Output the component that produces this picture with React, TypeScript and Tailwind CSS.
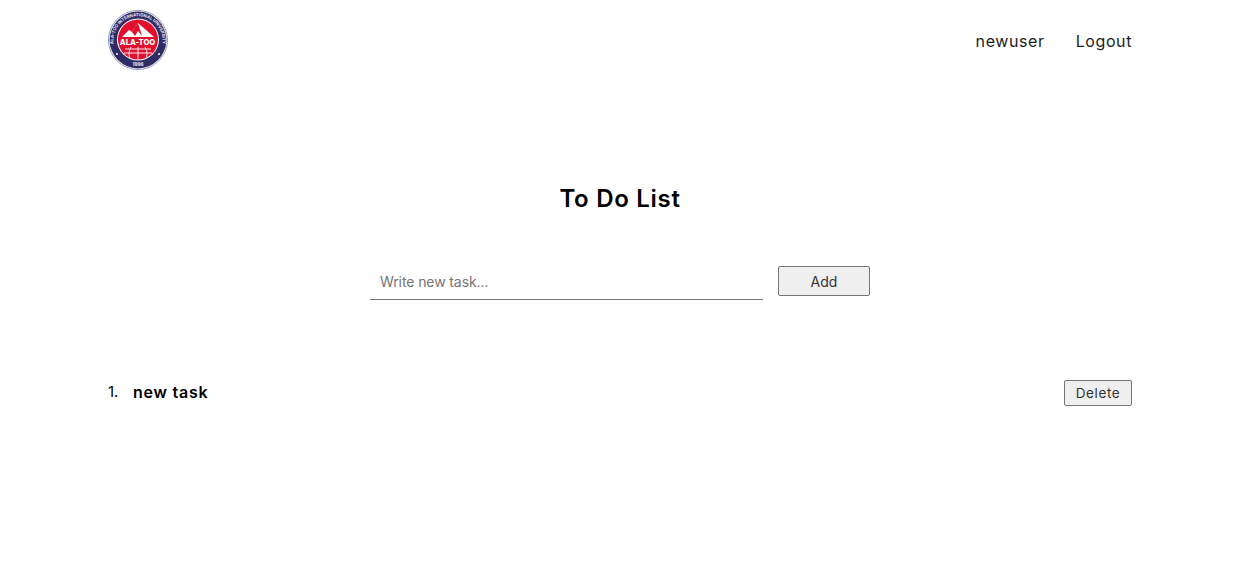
const font = { fontFamily: '"Inter", "Noto Sans", sans-serif' };

function Logo() {
  return (
    <svg width="60" height="60" viewBox="0 0 60 60" className="block">
      <defs>
        <path id="ring-top" d="M6.2 37 A24.6 24.6 0 1 1 53.8 37" />
        <clipPath id="disc">
          <circle cx="30" cy="29.5" r="20" />
        </clipPath>
      </defs>
      <circle cx="30" cy="30" r="29.5" fill="#fff" stroke="#9a9ab8" strokeWidth="1" />
      <circle cx="30" cy="30" r="28.4" fill="#2f2c63" />
      <circle cx="30" cy="29.5" r="21" fill="#fff" />
      <circle cx="30" cy="29.5" r="20" fill="#e2102f" />
      <g clipPath="url(#disc)">
        <path d="M14 27 L21 20 L24 22 L30 13 L46 27 Z" fill="#fff" />
        <path d="M24 22 L27 26 L30 21 L34 26 L30 13 Z" fill="#e2102f" />
        <path d="M17 39 H43 M16 43 H44 M30 37 V50 M23 37 Q19 44 23 50 M37 37 Q41 44 37 50" fill="none" stroke="#fff" strokeWidth="0.9" />
      </g>
      <text x="29.5" y="35" textAnchor="middle" fill="#fff" fontSize="7.6" fontWeight="800" fontFamily="Inter, sans-serif">ALA-TOO</text>
      <text fill="#e6e6f2" fontSize="4.3" fontWeight="700" fontFamily="Inter, sans-serif">
        <textPath href="#ring-top" startOffset="50%" textAnchor="middle">ALA-TOO INTERNATIONAL UNIVERSITY</textPath>
      </text>
      <text x="30" y="56" textAnchor="middle" fill="#f2f2f8" fontSize="4.6" fontWeight="700" fontFamily="Inter, sans-serif">1996</text>
      <circle cx="9" cy="44" r="1" fill="#fff" />
      <circle cx="51" cy="44" r="1" fill="#fff" />
    </svg>
  );
}

export default function App() {
  return (
    <div style={font} className="h-[572px] w-[1240px] bg-white px-[108px] pt-[10px] text-black">
      <header className="flex items-center justify-between">
        <Logo />
        <nav className="mt-[2px] flex gap-[31px] text-[16px] tracking-[0.6px] text-[#1c1c1c]">
          <a>newuser</a>
          <a>Logout</a>
        </nav>
      </header>

      <h1 className="mt-[114px] text-center text-[24px] leading-[30px] font-semibold tracking-[0.7px]">To Do List</h1>

      <form className="mx-auto mt-[52px] flex w-[500px] items-start">
        <input
          placeholder="Write new task..."
          className="h-[34px] w-[393px] border-b border-[#767676] px-[10px] pb-[2px] text-[14px] tracking-[-0.1px] outline-none placeholder:text-[#757575]"
        />
        <button
          type="button"
          className="ml-[15px] h-[30px] w-[92px] rounded-[2px] border border-[#767676] bg-[#efefef] text-[14px] tracking-[0.1px] text-[#333]"
        >
          Add
        </button>
      </form>

      <ol className="mt-[80px]">
        <li className="flex h-[26px] items-center justify-between">
          <div className="flex items-center pb-[2px]">
            <span className="w-[25px] text-[15px]">1.</span>
            <span className="text-[16px] font-semibold tracking-[0.75px]">new task</span>
          </div>
          <button
            type="button"
            className="h-[26px] w-[68px] rounded-[2px] border border-[#767676] bg-[#efefef] text-[13.5px] tracking-[0.6px] text-[#333]"
          >
            Delete
          </button>
        </li>
      </ol>
    </div>
  );
}
